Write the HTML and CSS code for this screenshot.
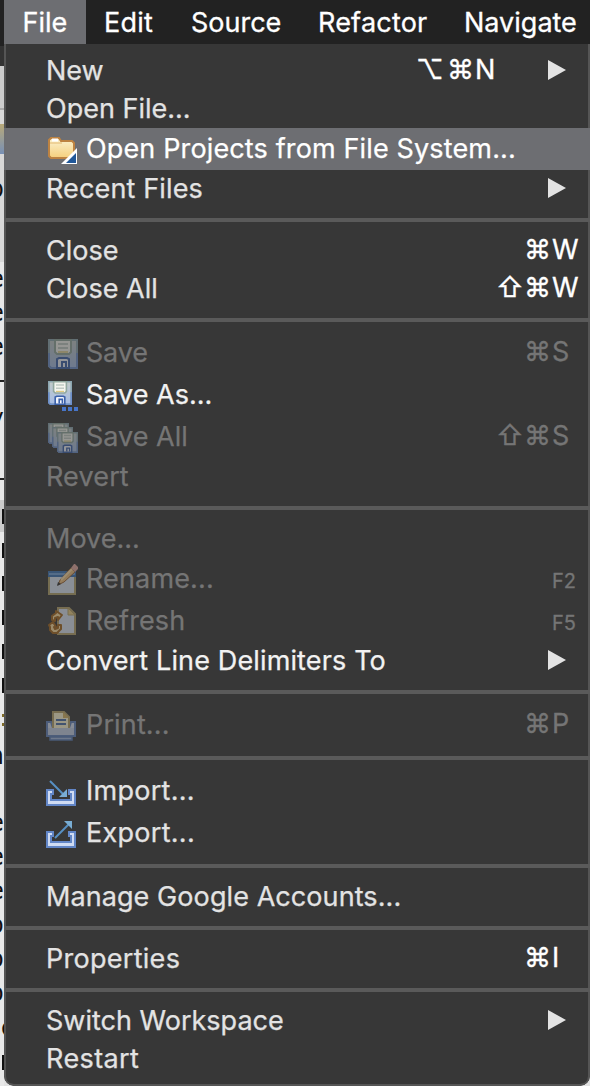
FILE: index.html
```html
<!DOCTYPE html>
<html lang="en">
<head>
<meta charset="utf-8">
<title>File menu</title>
<link rel="stylesheet" href="styles.css">
</head>
<body>
<svg class="defs" width="0" height="0" aria-hidden="true">
  <defs>
    <linearGradient id="metal" x1="0" y1="0" x2="0" y2="1"><stop offset="0" stop-color="#c3cbc8"/><stop offset="1" stop-color="#a5bce6"/></linearGradient>
    <linearGradient id="gold" x1="0" y1="0" x2="0" y2="1"><stop offset="0" stop-color="#fbf3d2"/><stop offset="1" stop-color="#f5cf7c"/></linearGradient>
    <symbol id="disk" viewBox="0 0 30 30">
      <path d="M1 1H29V29H3L1 27Z" fill="url(#metal)" stroke="#8ba5b0" stroke-width="2"/>
      <path d="M1 14V27L3 29H29V14" fill="none" stroke="#6d8fcb" stroke-width="2"/>
      <path d="M7 1V13L9 15H21L23 13V1Z" fill="#f4f5ee" stroke="#91a79e" stroke-width="2"/>
      <path d="M10 5H20M10 9H20" stroke="#c0cac4" stroke-width="2"/>
      <path d="M10 13H20" stroke="#dec981" stroke-width="1.5"/>
      <path d="M9 29V20L11 19H19L21 20V29Z" fill="#eef2fb" stroke="#3b61aa" stroke-width="2"/>
      <path d="M14 28V23H18V28" fill="none" stroke="#3b61aa" stroke-width="2"/>
    </symbol>
    <symbol id="tray" viewBox="0 0 30 17">
      <path d="M1 1H7V5H5V11H25V5H23V1H29V16H1Z" fill="#d0dcf3" stroke="#6286c7" stroke-width="2"/>
    </symbol>
  </defs>
</svg>
<div class="screen">
  <div class="editor" aria-hidden="true">
    <i class="toolbar"></i>
    <i class="glyph" style="top:175px">p</i>
    <i class="glyph" style="top:265px">e</i>
    <i class="glyph" style="top:299px">e</i>
    <i class="glyph" style="top:333px">e</i>
    <i class="dash" style="top:380px"></i>
    <i class="glyph" style="top:404px">y</i>
    <i class="dash" style="top:478px"></i>
    <i class="bar" style="top:509px"></i><i class="bar" style="top:543px"></i><i class="bar" style="top:576px"></i>
    <i class="bar" style="top:610px"></i><i class="bar" style="top:644px"></i><i class="bar" style="top:678px"></i>
    <i class="dot" style="top:714px"></i><i class="dot" style="top:723px"></i>
    <i class="glyph" style="top:742px">n</i>
    <i class="glyph" style="top:809px">e</i><i class="glyph" style="top:843px">e</i><i class="glyph" style="top:877px">e</i>
    <i class="glyph" style="top:911px">o</i><i class="glyph" style="top:945px">o</i><i class="glyph" style="top:979px">o</i>
    <i class="glyph head" style="top:1014px">c</i>
    <i class="bar" style="top:1055px"></i>
  </div>
  <main class="window">
    <nav class="menubar">
      <span class="tab active">File</span><span class="tab edit">Edit</span><span class="tab source">Source</span><span class="tab refactor">Refactor</span><span class="tab navigate">Navigate</span>
    </nav>
    <div class="menu">
      <div class="item"><span class="label">New</span><span class="keys wide"><b class="opt">⌥</b><b>⌘</b><span>N</span></span><svg class="arrow" viewBox="0 0 18 20"><path d="M0 0L18 10L0 20Z"/></svg></div>
      <div class="item"><span class="label">Open File...</span></div>
      <div class="item tall selected">
        <svg class="icon" viewBox="0 0 32 32"><path d="M3 23V7L5 5H13L15 8H26L28 10V23L26 25H5Z" fill="url(#gold)" stroke="#bd8342" stroke-width="2"/><path d="M6 7H12" stroke="#fff" stroke-width="3"/><path d="M4 10H16" stroke="#e3b972" stroke-width="1"/><path d="M15 31L31 15V31Z" fill="#fff"/><path d="M20 30L30 20V30Z" fill="#215899"/></svg>
        <span class="label projects">Open Projects from File System...</span></div>
      <div class="item"><span class="label recent">Recent Files</span><svg class="arrow" viewBox="0 0 18 20"><path d="M0 0L18 10L0 20Z"/></svg></div>
      <hr>
      <div class="item"><span class="label">Close</span><span class="keys"><b>⌘</b><span>W</span></span></div>
      <div class="item"><span class="label">Close All</span><span class="keys"><b class="shift">⇧</b><b>⌘</b><span>W</span></span></div>
      <hr>
      <div class="item tall off"><svg class="icon" viewBox="0 0 32 32"><use href="#disk" x="2" y="2" width="30" height="30"/></svg><span class="label tight">Save</span><span class="keys"><b>⌘</b><span>S</span></span></div>
      <div class="item tall bright"><svg class="icon" viewBox="0 0 32 32"><use href="#disk" x="2" y="2" width="24" height="24"/><path d="M16 28h4v4h-4zM22 28h4v4h-4zM28 28h4v4h-4z" fill="#4775c8"/></svg><span class="label">Save As...</span></div>
      <div class="item tall off"><svg class="icon" viewBox="0 0 32 32"><use href="#disk" x="2" y="2" width="21" height="21"/><use href="#disk" x="6" y="6" width="21" height="21"/><use href="#disk" x="11" y="11" width="21" height="21"/></svg><span class="label">Save All</span><span class="keys"><b class="shift">⇧</b><b>⌘</b><span>S</span></span></div>
      <div class="item off"><span class="label loose">Revert</span></div>
      <hr>
      <div class="item off"><span class="label">Move...</span></div>
      <div class="item tall off">
        <svg class="icon" viewBox="0 0 32 32"><path d="M3 9H29V31H3Z" fill="#dce7f5" stroke="#b4a36c" stroke-width="2"/><path d="M2 8H30V14H2Z" fill="#3c73b5"/><path d="M3 11H29" stroke="#72a2d9" stroke-width="2"/><path d="M12 22L14 17L25 5L29 9L18 19Z" fill="#f0c080" stroke="#9b6535" stroke-width="1"/><path d="M15 17L26 6" stroke="#ffe0ac" stroke-width="2"/><path d="M25 5L28 1H29L32 4V6L29 9Z" fill="#e5aaa0"/><path d="M11 23L12 19L15 21Z" fill="#333"/></svg>
        <span class="label loose">Rename...</span><span class="keys small"><span>F2</span></span></div>
      <div class="item tall off">
        <svg class="icon" viewBox="0 0 32 32"><path d="M12 3H23L29 9V29H12Z" fill="#dce5f3" stroke="#b7a46b" stroke-width="2"/><path d="M22 3V10H29Z" fill="#edce86" stroke="#b7a46b"/><path d="M6 15V11L10 8V6L16 10L12 15V12L9 13V16Z" fill="#ffdfa0" stroke="#a5671e" stroke-width="2" stroke-linejoin="round"/><path d="M3 20L7 17L10 22H8L9 24L12 23V20H15V24L11 28H7L4 25V22Z" fill="#ffdfa0" stroke="#a5671e" stroke-width="2" stroke-linejoin="round"/></svg>
        <span class="label loose">Refresh</span><span class="keys small"><span>F5</span></span></div>
      <div class="item bright"><span class="label loose">Convert Line Delimiters To</span><svg class="arrow" viewBox="0 0 18 20"><path d="M0 0L18 10L0 20Z"/></svg></div>
      <hr>
      <div class="item tall off">
        <svg class="icon" viewBox="0 0 32 32"><path d="M1 13H5L7 19H23L25 13H29V27H1Z" fill="#d6e0f2" stroke="#6384bd" stroke-width="2"/><path d="M7 21V3H18L23 8V21Z" fill="#fff6d3" stroke="#b7a36b" stroke-width="2"/><path d="M17 3V9H23Z" fill="#d7b362"/><path d="M10 11H20M10 15H20" stroke="#4d70a8" stroke-width="2"/><path d="M2 19H28V26H2Z" fill="#c5d1e6"/><path d="M4 28H26V31H4Z" fill="#a5bbdf" stroke="#5b7db7" stroke-width="1.5"/></svg>
        <span class="label loose">Print...</span><span class="keys"><b>⌘</b><span>P</span></span></div>
      <hr>
      <div class="item tall"><svg class="icon" viewBox="0 0 32 32"><use href="#tray" x="0" y="14" width="30" height="17"/><path d="M4 6L17 19" stroke="#5790c4" stroke-width="2"/><path d="M21 14V22H13L16 19L18 17Z" fill="#79add4"/></svg><span class="label port">Import...</span></div>
      <div class="item tall"><svg class="icon" viewBox="0 0 32 32"><use href="#tray" x="0" y="14" width="30" height="17"/><path d="M9 21L23 7" stroke="#5790c4" stroke-width="2"/><path d="M18 4H26V12Z" fill="#79add4"/></svg><span class="label port">Export...</span></div>
      <hr>
      <div class="item"><span class="label manage">Manage Google Accounts...</span></div>
      <hr>
      <div class="item"><span class="label port">Properties</span><span class="keys"><b>⌘</b><span>I</span></span></div>
      <hr>
      <div class="item"><span class="label">Switch Workspace</span><svg class="arrow" viewBox="0 0 18 20"><path d="M0 0L18 10L0 20Z"/></svg></div>
      <div class="item"><span class="label restart">Restart</span></div>
    </div>
  </main>
</div>
</body>
</html>
```
FILE: styles.css
```css
* { box-sizing: border-box; }
body { margin: 0; background: #e2e2e2; font-family: Inter, "Liberation Sans", sans-serif; font-size: 27px; color: #e3e3e3; }
.defs { display: block; }
.screen { width: 590px; height: 1086px; display: flex; overflow: hidden; }
.editor { width: 4px; flex: none; position: relative; overflow: hidden; background: linear-gradient(#222 0 46px, #333 46px 66px, #ccc 66px 108px, #aaa 108px 110px, #d8d8d8 110px 262px, #e8e8e8 262px 500px, #ccc 500px 532px, #e8e8e8 532px); }
.editor i { position: absolute; right: 0; font-style: normal; }
.toolbar { top: 124px; width: 4px; height: 30px; background: linear-gradient(#b8a979, #7890b5); }
.glyph { font: 24px/28px "DejaVu Sans Mono", monospace; color: #111; }
.editor .head { right: auto; left: 0; }
.bar { width: 2px; height: 15px; background: #111; }
.dash { width: 4px; height: 2px; background: #222; }
.dot { width: 2px; height: 3px; background: #806c28; }
.window { width: 586px; display: flex; flex-direction: column; }
.menubar { height: 44px; flex: none; display: flex; background: #222; color: #fff; }
.tab { flex: none; line-height: 46px; height: 44px; white-space: nowrap; -webkit-text-stroke: .3px; }
.active { width: 82px; padding-left: 18.5px; background: #6d6e72; }
.edit { width: 105px; padding-left: 18px; letter-spacing: .2px; }
.source { width: 127px; }
.refactor { width: 146px; letter-spacing: .2px; }
.menu { flex: 1; padding: 8px 0 0; background: #373737; box-shadow: inset 2px 0 #555, inset -2px 0 #555, inset 0 -2px #555; border-radius: 0 0 10px 10px; clip-path: inset(0 round 0 0 10px 10px); }
.item { height: 38px; padding: 0 24px 0 42px; display: flex; align-items: center; white-space: nowrap; }
.tall { height: 42px; }
.selected { background: #6d6e72; color: #fff; }
.bright { color: #f2f2f2; }
.label { line-height: 38px; margin-right: auto; -webkit-text-stroke: .25px; }
.projects { letter-spacing: .14px; }
.recent, .loose { letter-spacing: .14px; }
.tight { letter-spacing: -.2px; }
.port { letter-spacing: .28px; }
.restart { letter-spacing: .4px; }
.manage { letter-spacing: .08px; }
.icon { width: 32px; height: 32px; margin-right: 8px; flex: none; }
.off { color: #757575; }
.off .icon { opacity: .5; }
.arrow { width: 18px; height: 20px; margin-bottom: 2px; fill: #e3e3e3; flex: none; }
.keys { display: flex; align-items: center; color: #fff; margin-right: -23px; padding-bottom: 2px; -webkit-text-stroke: .3px; }
.off .keys { color: #757575; }
.keys > span { width: 37px; line-height: 38px; }
.keys b { font: 27px/38px Inter, "DejaVu Sans", sans-serif; width: 28px; }
.keys.wide { margin-right: 36px; }
.keys .opt { width: 31px; }
.keys.small { font-size: 20px; padding: 3px 0 0; }
hr { height: 4px; margin: 10px 0; border: 0; background: #5a5a5a; }
```
